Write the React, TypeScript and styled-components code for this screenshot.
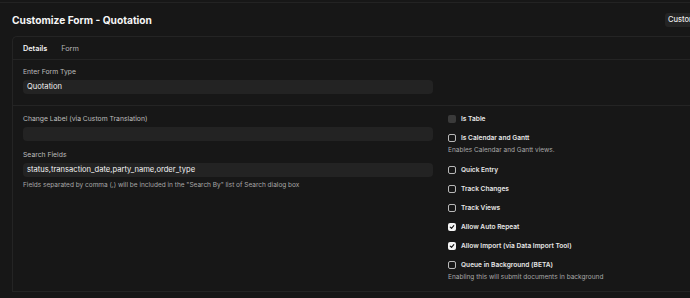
import * as React from 'react';
import styled, { createGlobalStyle } from 'styled-components';

const GlobalStyle = createGlobalStyle`
  html, body {
    margin: 0;
    padding: 0;
    background: #171717;
    overflow: hidden;
  }
  body {
    font-family: Inter, "Noto Sans", sans-serif;
    color: #ededed;
  }
`;

const Page = styled.div`
  width: 900px;
  border-top: 1px solid #232323;
  margin-top: 2px;
`;

const Header = styled.div`
  display: flex;
  align-items: center;
  justify-content: space-between;
  height: 33px;
  padding: 0 12px;
`;

const Title = styled.h1`
  margin: 0;
  font-size: 10.2px;
  font-weight: 700;
  color: #f5f5f5;
`;

const Actions = styled.div`
  display: flex;
  gap: 6px;
  width: 223px;
`;

const Button = styled.button`
  height: 14px;
  padding: 0 3px;
  border: none;
  border-radius: 3px;
  background: #242424;
  color: #e8e8e8;
  font-family: inherit;
  font-size: 7.5px;
  font-weight: 500;
`;

const Card = styled.div`
  margin: 0 12px;
  height: 254px;
  border: 1px solid #242424;
  border-right: none;
  border-radius: 5px 0 0 0;
`;

const Tabs = styled.div`
  display: flex;
  align-items: center;
  gap: 14px;
  height: 22px;
  padding: 0 10px;
  border-bottom: 1px solid #242424;
`;

const Tab = styled.div<{ $active?: boolean }>`
  font-size: 7.3px;
  font-weight: ${p => (p.$active ? 600 : 400)};
  color: ${p => (p.$active ? '#f2f2f2' : '#b5b5b5')};
`;

const Section = styled.div<{ $first?: boolean }>`
  display: grid;
  grid-template-columns: 410px 1fr;
  column-gap: 15px;
  padding: ${p => (p.$first ? '7px' : '8px')} 10px 11px;
  border-bottom: 1px solid #242424;
`;

const Column = styled.div`
  display: flex;
  flex-direction: column;
`;

const Field = styled.div`
  display: flex;
  flex-direction: column;
  & + & {
    margin-top: 9px;
  }
`;

const Label = styled.label`
  height: 10px;
  line-height: 10px;
  margin-bottom: 3px;
  font-size: 6.8px;
  color: #bdbdbd;
`;

const Input = styled.div`
  flex: none;
  height: 14px;
  line-height: 14px;
  padding: 0 4px;
  border-radius: 4px;
  background: #232323;
  font-size: 7.6px;
  color: #f2f2f2;
`;

const Help = styled.div`
  margin-top: 3px;
  font-size: 6.5px;
  line-height: 10px;
  color: #a8a8a8;
`;

const Check = styled.div`
  display: flex;
  align-items: center;
  gap: 5px;
  height: 9px;
`;

const CheckWrap = styled.div`
  & + & {
    margin-top: 10px;
  }
`;

const Box = styled.span<{ $checked?: boolean; $disabled?: boolean }>`
  box-sizing: border-box;
  display: inline-flex;
  align-items: center;
  justify-content: center;
  width: 8px;
  height: 8px;
  border-radius: 2px;
  border: ${p => (p.$disabled || p.$checked ? 'none' : '1px solid #b8b8b8')};
  background: ${p => (p.$disabled ? '#3a3a3a' : p.$checked ? '#f5f5f5' : 'transparent')};
`;

const CheckLabel = styled.span`
  font-size: 6.6px;
  font-weight: 600;
  color: #e6e6e6;
`;

const CheckHelp = styled.div`
  margin-top: 3px;
  font-size: 6.5px;
  line-height: 10px;
  color: #a8a8a8;
`;

const Tick = () => (
  <svg width="6" height="6" viewBox="0 0 10 10">
    <path d="M2 5.2 L4.2 7.3 L8 2.8" fill="none" stroke="#111" strokeWidth="1.8" strokeLinecap="round" strokeLinejoin="round" />
  </svg>
);

interface IOption {
  label: string;
  checked?: boolean;
  disabled?: boolean;
  help?: string;
}

const options: IOption[] = [
  { label: 'Is Table', disabled: true },
  { label: 'Is Calendar and Gantt', help: 'Enables Calendar and Gantt views.' },
  { label: 'Quick Entry' },
  { label: 'Track Changes' },
  { label: 'Track Views' },
  { label: 'Allow Auto Repeat', checked: true },
  { label: 'Allow Import (via Data Import Tool)', checked: true },
  { label: 'Queue in Background (BETA)', help: 'Enabling this will submit documents in background' },
];

const App: React.FunctionComponent = () => (
  <>
    <GlobalStyle />
    <Page>
      <Header>
        <Title>Customize Form - Quotation</Title>
        <Actions>
          <Button>Customize</Button>
          <Button>Actions</Button>
          <Button>Update</Button>
        </Actions>
      </Header>
      <Card>
        <Tabs>
          <Tab $active>Details</Tab>
          <Tab>Form</Tab>
        </Tabs>
        <Section $first>
          <Column>
            <Field>
              <Label>Enter Form Type</Label>
              <Input>Quotation</Input>
            </Field>
          </Column>
        </Section>
        <Section>
          <Column>
            <Field>
              <Label>Change Label (via Custom Translation)</Label>
              <Input />
            </Field>
            <Field>
              <Label>Search Fields</Label>
              <Input>status,transaction_date,party_name,order_type</Input>
              <Help>Fields separated by comma (,) will be included in the "Search By" list of Search dialog box</Help>
            </Field>
          </Column>
          <Column>
            {options.map(o => (
              <CheckWrap key={o.label}>
                <Check>
                  <Box $checked={o.checked} $disabled={o.disabled}>{o.checked && <Tick />}</Box>
                  <CheckLabel>{o.label}</CheckLabel>
                </Check>
                {o.help && <CheckHelp>{o.help}</CheckHelp>}
              </CheckWrap>
            ))}
          </Column>
        </Section>
      </Card>
    </Page>
  </>
);

export default App;
